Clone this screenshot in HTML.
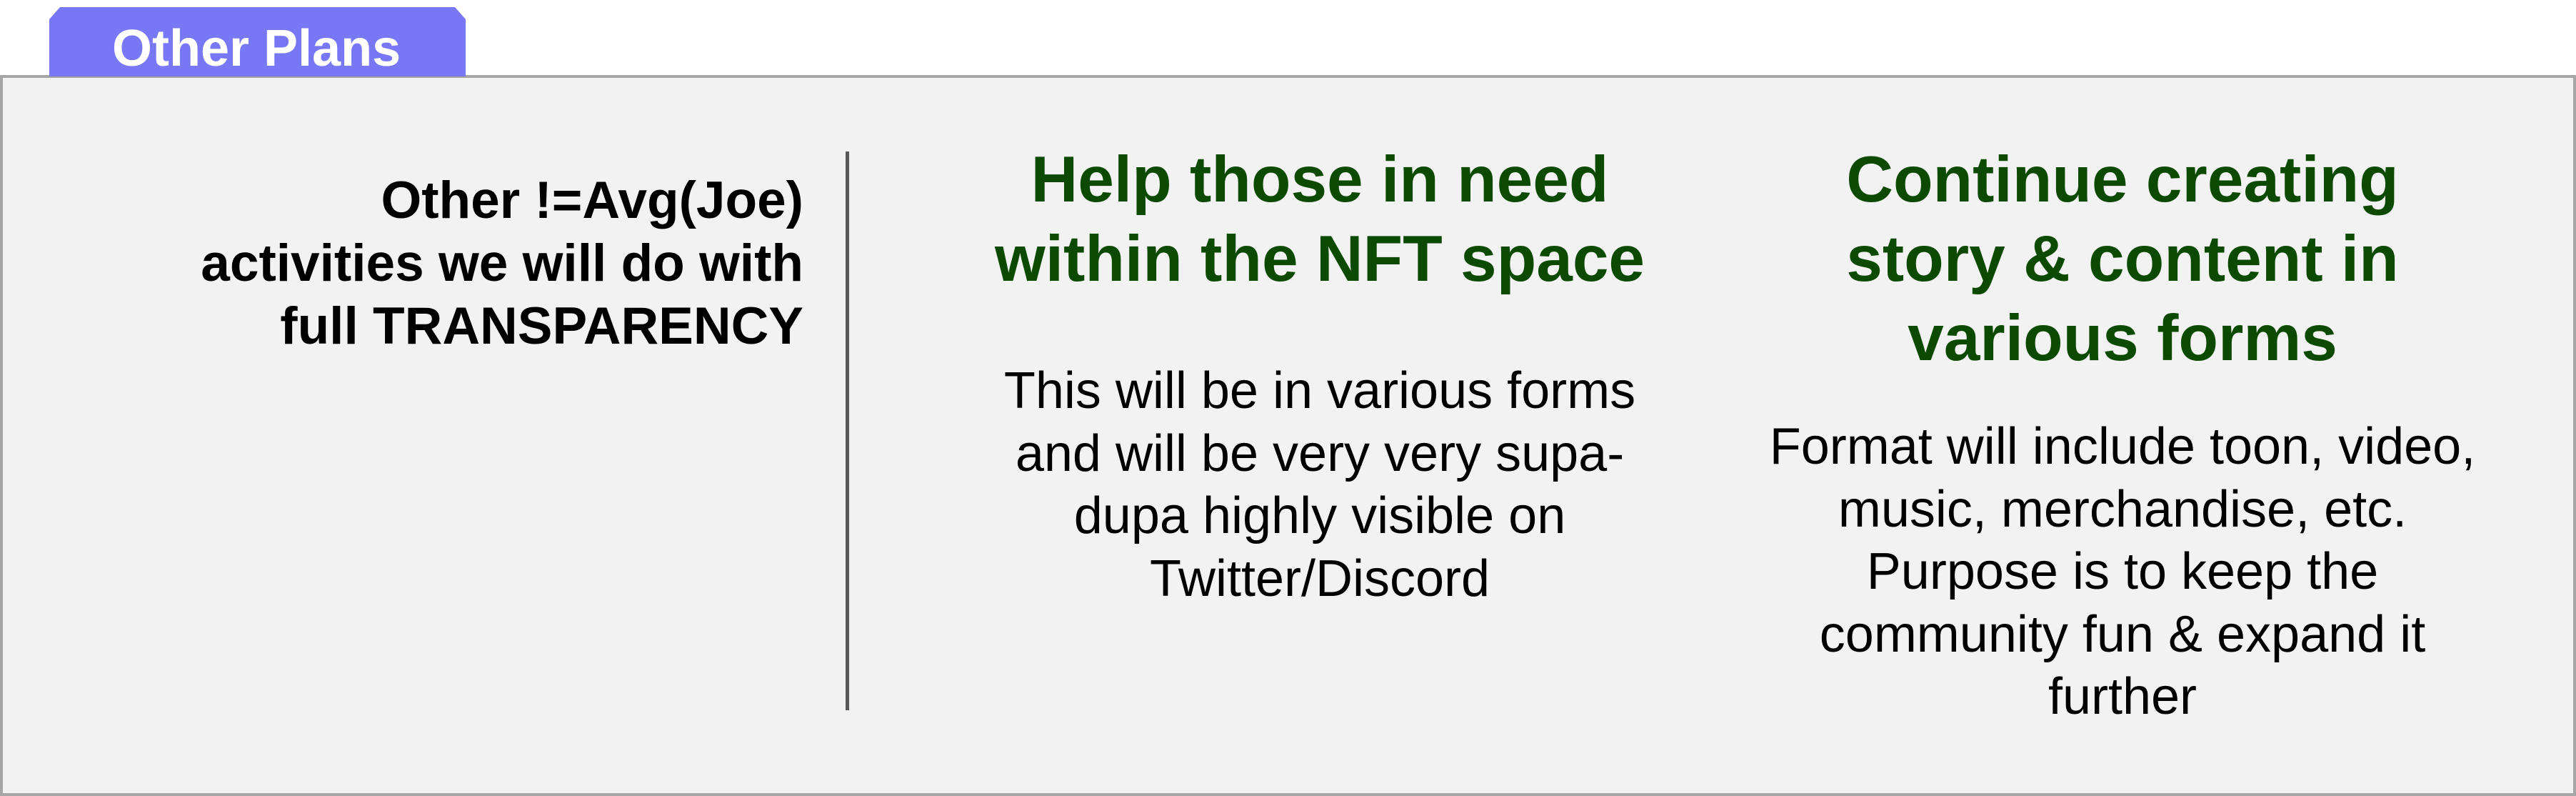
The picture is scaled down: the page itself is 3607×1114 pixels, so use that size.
<!DOCTYPE html>
<html><head><meta charset="utf-8"><style>
html,body{margin:0;padding:0;width:3607px;height:1114px;background:#fff;overflow:hidden;font-family:"Liberation Sans",Arial,sans-serif;}
.frame{position:absolute;left:0;top:105px;width:3599px;height:1001px;background:#f2f2f2;border:4px solid #a6a6a6;}
.tab{position:absolute;left:69px;top:10px;width:583px;height:97px;background:#7878f7;clip-path:polygon(15px 0,568px 0,583px 17px,583px 100%,0 100%,0 17px);}
.tabt{position:absolute;left:157px;top:32px;font-size:72px;line-height:72px;font-weight:bold;color:#fff;white-space:nowrap;}
.lt{position:absolute;right:calc(3607px - 1125px);top:237px;font-size:73px;line-height:88px;font-weight:bold;color:#000;text-align:right;white-space:nowrap;}
.div{position:absolute;left:1184px;top:212px;width:5px;height:782px;background:#595959;}
.h{position:absolute;font-size:91px;line-height:111px;font-weight:bold;color:#0b4a00;text-align:center;white-space:nowrap;transform:translateX(-50%);}
.b{position:absolute;font-size:72px;line-height:87.5px;color:#000;text-align:center;white-space:nowrap;transform:translateX(-50%);}
</style></head><body>
<div class="frame"></div>
<div class="tab"></div>
<div class="tabt">Other Plans</div>
<div class="lt">Other !=Avg(Joe)<br>activities we will do with<br>full TRANSPARENCY</div>
<div class="div"></div>
<div class="h" style="left:1848px;top:196px;">Help those in need<br>within the NFT space</div>
<div class="b" style="left:1848px;top:504px;">This will be in various forms<br>and will be very very supa-<br>dupa highly visible on<br>Twitter/Discord</div>
<div class="h" style="left:2972px;top:196px;">Continue creating<br>story &amp; content in<br>various forms</div>
<div class="b" style="left:2972px;top:582px;">Format will include toon, video,<br>music, merchandise, etc.<br>Purpose is to keep the<br>community fun &amp; expand it<br>further</div>
</body></html>
